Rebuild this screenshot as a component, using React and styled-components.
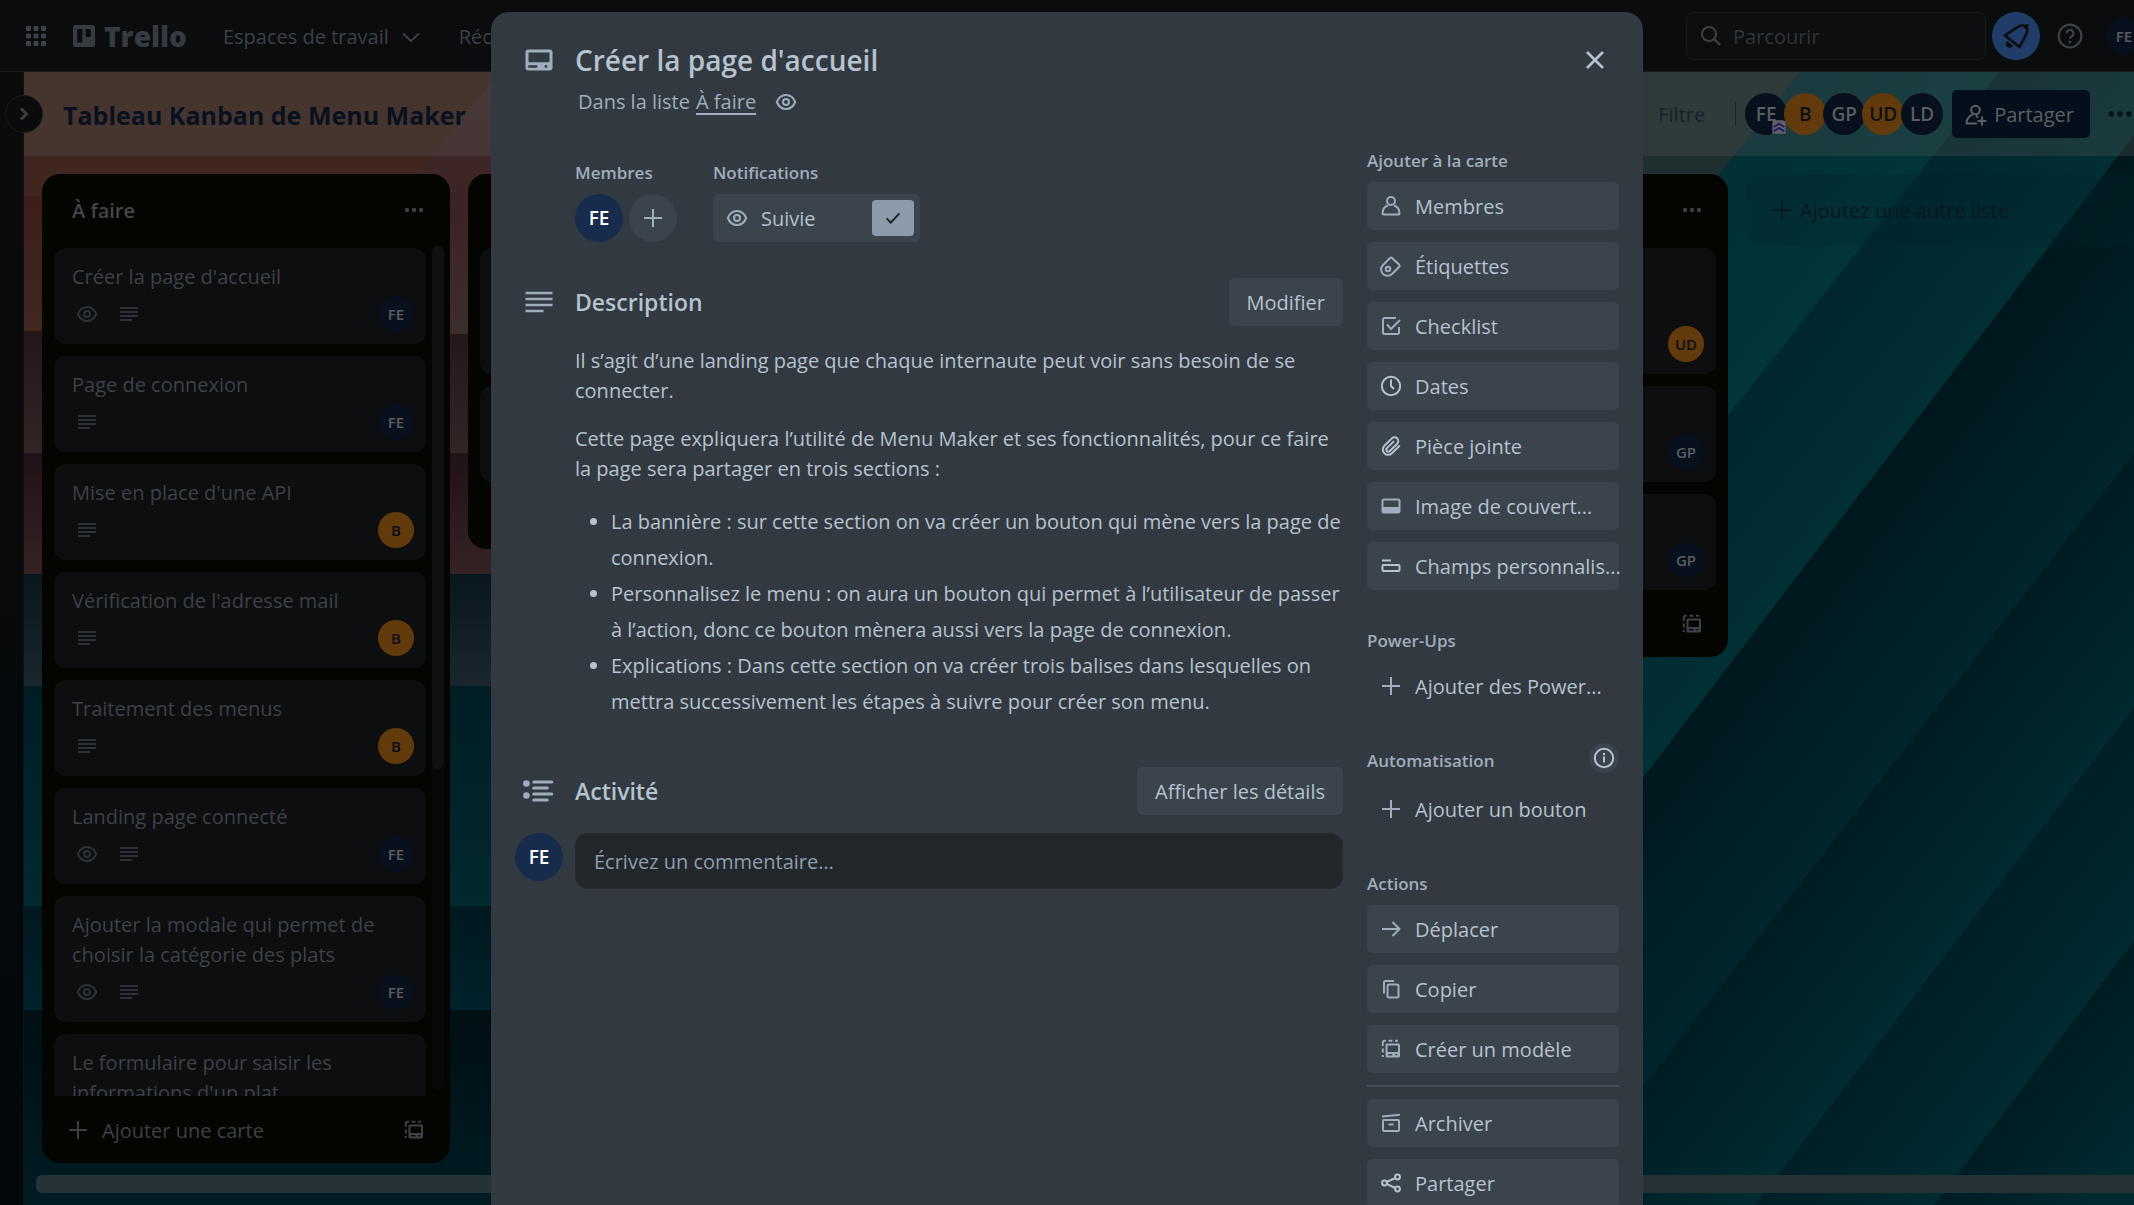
import React from "react";
import styled, { createGlobalStyle } from "styled-components";

const GlobalStyle = createGlobalStyle`
  *, *::before, *::after { box-sizing: border-box; }
  body {
    margin: 0;
    overflow: hidden;
    background: #00262b;
    font-family: "Open Sans", "Noto Sans", sans-serif;
    font-size: 20px;
    line-height: 30px;
  }
  button, input { font: inherit; color: inherit; }
  button { border: 0; padding: 0; background: none; cursor: pointer; }
  h1, h2, h3, p, ul { margin: 0; padding: 0; font-size: inherit; font-weight: inherit; }
`;

/* ---------- icons ---------- */

const Svg = styled.svg`
  display: block;
  flex: none;
  width: ${(p) => p.$size}px;
  height: ${(p) => p.$size}px;
  fill: none;
  stroke: currentColor;
  stroke-width: 2;
`;

const shapes = {
  grid: (
    <g fill="currentColor" stroke="none">
      {[2, 9.5, 17].map((y) => [2, 9.5, 17].map((x) => <rect key={`${x}-${y}`} x={x} y={y} width="5" height="5" rx="1" />))}
    </g>
  ),
  trello: (
    <path
      fill="currentColor"
      stroke="none"
      fillRule="evenodd"
      d="M3 1h18a2 2 0 0 1 2 2v18a2 2 0 0 1-2 2H3a2 2 0 0 1-2-2V3a2 2 0 0 1 2-2zM6 5a.8.8 0 0 0-.8.800v12a.8.8 0 0 0 .8.8h3.600a.8.8 0 0 0 .8-.8V5.800A.8.8 0 0 0 9.600 5zM14.400 5a.8.8 0 0 0-.8.800v6.400a.8.8 0 0 0 .8.8H18a.8.8 0 0 0 .8-.8V5.800A.8.8 0 0 0 18 5z"
    />
  ),
  chevronDown: <path d="M4 8.500l8 7.500 8-7.500" />,
  chevronRight: <path d="M9 6.500l5.500 5.500L9 17.500" strokeWidth="3" />,
  search: (
    <>
      <circle cx="10" cy="10" r="7" />
      <path d="M15 15l6 6" strokeWidth="2.400" />
    </>
  ),
  bell: (
    <>
      <path d="M2.500 11.500L14 4c2.500-1.600 6-1.300 7 .2 1 1.600.8 4.800-1 7.800l-5 9.500z" strokeLinejoin="round" strokeWidth="2.200" />
      <path d="M20 4.500l1.800-1.800" strokeWidth="2.200" strokeLinecap="round" />
      <path d="M4.500 17.500a2.400 2.400 0 0 0 4 2.800z" fill="currentColor" strokeWidth="1.500" />
    </>
  ),
  help: (
    <>
      <circle cx="12" cy="12" r="10.500" />
      <path d="M8.800 9.600a3.200 3.200 0 1 1 4.600 2.900c-1 .5-1.400 1-1.400 2.200" />
      <circle cx="12" cy="17.600" r="1.300" fill="currentColor" stroke="none" />
    </>
  ),
  dots: (
    <g fill="currentColor" stroke="none">
      <circle cx="5" cy="12" r="2.200" />
      <circle cx="12" cy="12" r="2.200" />
      <circle cx="19" cy="12" r="2.200" />
    </g>
  ),
  eye: (
    <>
      <path d="M2.800 12C4.500 7.800 8 5 12 5s7.500 2.800 9.200 7C19.500 16.200 16 19 12 19s-7.500-2.800-9.200-7z" />
      <circle cx="12" cy="12" r="3" />
    </>
  ),
  lines: <path d="M3 6h18M3 10h18M3 14h18M3 18h12" strokeWidth="1.800" />,
  activity: (
    <>
      <g fill="currentColor" stroke="none">
        <circle cx="3.600" cy="7" r="2.200" />
        <circle cx="3.600" cy="15" r="2.200" />
      </g>
      <path d="M8.500 6h12M8.500 10h9M8.500 14h12M8.500 18h9" strokeLinecap="round" />
    </>
  ),
  plus: <path d="M12 3v18M3 12h18" />,
  close: <path d="M4 4l16 16M20 4L4 20" strokeWidth="2.600" />,
  check: <path d="M5 12.500l4.500 4.500L19 7" strokeWidth="2" />,
  card: (
    <path
      fill="currentColor"
      stroke="none"
      fillRule="evenodd"
      d="M5 5h14a2 2 0 0 1 2 2v10a2 2 0 0 1-2 2H5a2 2 0 0 1-2-2V7a2 2 0 0 1 2-2zM5 7v6.500h14V7zM5.500 15.500a.8.8 0 0 0 0 1.700h4.700a.8.8 0 0 0 0-1.700zM16.600 15.400a.9.9 0 1 0 .01 0z"
    />
  ),
  user: (
    <>
      <circle cx="12" cy="7" r="4" />
      <path d="M9 11.500c-3 1-5.500 4-5.500 8 0 .8.400 1 1 1h15c.6 0 1-.2 1-1 0-4-2.500-7-5.500-8" />
    </>
  ),
  userPlus: (
    <>
      <circle cx="11.500" cy="7" r="4.300" />
      <path d="M8.800 11.500C5 13 2.500 16 2.500 20.500H13M14 14.500l-2-2M18 13.500v9M13.500 18h9" />
    </>
  ),
  tag: (
    <>
      <path d="M11 4a1.500 1.500 0 0 1 2 0l7.300 6.800a1.500 1.500 0 0 1 0 2L13 20a6.300 6.300 0 0 1-9-9z" strokeLinejoin="round" />
      <circle cx="9" cy="15" r="2.200" />
    </>
  ),
  checklist: (
    <>
      <path d="M17 4H5.500A1.500 1.500 0 0 0 4 5.500v13A1.500 1.500 0 0 0 5.500 20h13a1.500 1.500 0 0 0 1.500-1.500V13" />
      <path d="M8 10.500l4 4.500 9-9" />
    </>
  ),
  clock: (
    <>
      <circle cx="12" cy="12" r="9.200" />
      <path d="M12 5.500V12l3 3" />
    </>
  ),
  clip: (
    <path d="M20.300 12l-7.400 7.300a5.300 5.300 0 0 1-7.500-7.500l7.500-7.400a3.700 3.700 0 0 1 5.300 5.300l-7.400 7.300a2 2 0 0 1-2.900-2.900l6.600-6.500" strokeLinecap="round" />
  ),
  cover: (
    <>
      <rect x="3.500" y="5.500" width="17" height="13" rx="1.500" />
      <path d="M4 13h16v5.500H4z" fill="currentColor" stroke="none" />
    </>
  ),
  fields: (
    <>
      <path d="M3 6.500h9" />
      <rect x="3.500" y="11" width="17" height="6" rx="1" />
    </>
  ),
  info: (
    <>
      <circle cx="12" cy="12" r="9.200" />
      <path d="M12 10.500v6" />
      <circle cx="12" cy="8" r="1.200" fill="currentColor" stroke="none" />
    </>
  ),
  arrow: <path d="M3 12h17M13.500 5l7 7-7 7" />,
  copy: (
    <>
      <path d="M5 16.500V5.500A1.500 1.500 0 0 1 6.500 4H15" />
      <rect x="8.500" y="7.500" width="11" height="13" rx="1.500" />
    </>
  ),
  template: (
    <>
      <path d="M3.800 20v-2M3.800 15.500v-4M3.800 9V5.500A1.500 1.500 0 0 1 5.300 3.800H7M9.500 3.800h4M16 3.800h3" />
      <path
        fill="currentColor"
        stroke="none"
        fillRule="evenodd"
        d="M8 6.500h11.500A1.500 1.500 0 0 1 21 8v11a1.500 1.500 0 0 1-1.500 1.500H8A1.500 1.500 0 0 1 6.500 19V8A1.500 1.500 0 0 1 8 6.500zM8.500 8.500V15h10.500V8.500zM9.200 17v1.600h4V17zM16.500 17v1.600h1.600V17z"
      />
    </>
  ),
  archive: (
    <>
      <path d="M3 5.500l18-1.700" />
      <rect x="4" y="9" width="16" height="11" rx="1" />
      <path d="M9.500 13.500h5" />
    </>
  ),
  share: (
    <>
      <circle cx="5.500" cy="12" r="2.400" />
      <circle cx="18.500" cy="6" r="2.400" />
      <circle cx="18.500" cy="18" r="2.400" />
      <path d="M7.700 11l8.600-4M7.700 13l8.600 4" />
    </>
  ),
  admin: (
    <>
      <path d="M2 7a5 5 0 0 1 5-5h10a5 5 0 0 1 5 5v15H2z" fill="#625f6c" stroke="none" />
      <path d="M4 12l8-5 8 5M4 18.500l8-5 8 5" stroke="#22185a" strokeWidth="2.600" />
    </>
  ),
};

const Icon = ({ name, size = 24 }) => (
  <Svg $size={size} viewBox="0 0 24 24" aria-hidden="true">
    {shapes[name]}
  </Svg>
);

/* ---------- page shell ---------- */

const Page = styled.div`
  position: relative;
  height: 100vh;
  overflow: hidden;
`;

const Shell = styled.div`
  display: flex;
  flex-direction: column;
  width: calc(100% + 20px);
  height: 100%;
  position: relative;
`;

const Wallpaper = styled.svg`
  position: absolute;
  inset: 0;
  width: 100%;
  height: 100%;
`;

const TopBar = styled.header`
  display: flex;
  align-items: center;
  height: 72px;
  padding: 0 6px 0 24px;
  background: #0a0c0e;
  border-bottom: 1px solid #17191b;
  color: #3b4147;
`;

const Logo = styled.a`
  display: flex;
  align-items: center;
  gap: 8px;
  margin: 0 36px 0 24px;
  color: #353b40;
  font-weight: 800;
  font-size: 28px;
  text-decoration: none;
`;

const NavButton = styled.button`
  display: flex;
  align-items: center;
  gap: 10px;
  height: 48px;
  margin-right: 36px;
  padding-top: 2px;
  white-space: nowrap;
`;

const IconButton = styled.button`
  display: grid;
  place-items: center;
  flex: none;
  width: ${(p) => p.$size || 48}px;
  height: ${(p) => p.$size || 48}px;
  border-radius: 50%;
  color: ${(p) => p.$color || "inherit"};
  background: ${(p) => p.$bg || "transparent"};
`;

const CloseButton = styled(IconButton)`
  margin: -6px 0;
`;

const TopRight = styled.div`
  display: flex;
  align-items: center;
  gap: 6px;
  margin-left: auto;
`;

const SearchBox = styled.label`
  display: flex;
  align-items: center;
  gap: 10px;
  width: 300px;
  height: 48px;
  padding: 0 12px;
  border: 1px solid #17191c;
  border-radius: 8px;
  background: #0c0e0f;
  input {
    flex: 1;
    min-width: 0;
    border: 0;
    padding: 2px 0 0;
    outline: 0;
    background: none;
  }
  input::placeholder { color: #2f353b; opacity: 1; }
`;

const tones = {
  navyDim: ["#08101d", "#5b5d60"],
  orangeDim: ["#633a0c", "#0b1016"],
  navy: ["#172b4d", "#ffffff"],
};

const Avatar = styled.span`
  position: relative;
  display: grid;
  place-items: center;
  flex: none;
  width: ${(p) => p.$size}px;
  height: ${(p) => p.$size}px;
  border-radius: 50%;
  font-size: ${(p) => (p.$size > 36 ? 19 : 15)}px;
  line-height: 24px;
  font-weight: 600;
  background: ${(p) => tones[p.$tone][0]};
  color: ${(p) => tones[p.$tone][1]};
`;

const Body = styled.div`
  display: flex;
  flex: 1;
  min-height: 0;
`;

const Rail = styled.aside`
  position: relative;
  z-index: 1;
  flex: none;
  width: 24px;
  background: linear-gradient(#0b0b0b, #0a0a0b 40%, #04090b 60%, #05080a);
  border-right: 1px solid #101314;
`;

const RailToggle = styled.button`
  position: absolute;
  left: 5px;
  top: 23px;
  display: grid;
  place-items: center;
  width: 38px;
  height: 38px;
  border: 1px solid #1b1c1d;
  border-radius: 50%;
  background: #0a0b0c;
  color: #3a3f45;
`;

const Board = styled.main`
  display: flex;
  flex-direction: column;
  flex: 1;
  min-width: 0;
  position: relative;
`;

const BoardHeader = styled.div`
  display: flex;
  align-items: center;
  height: 84px;
  padding: 0 10px 0 39px;
  background: rgba(85, 85, 85, 0.3);
`;

const BoardTitle = styled.h1`
  padding-top: 2px;
  font-size: 25px;
  line-height: 36px;
  font-weight: 700;
  color: #08111f;
  white-space: nowrap;
`;

const BoardTools = styled.div`
  display: flex;
  align-items: center;
  margin-left: auto;
`;

const FilterButton = styled.button`
  height: 48px;
  margin-right: 30px;
  padding-top: 2px;
  color: #15242a;
`;

const Divider = styled.span`
  width: 1px;
  height: 24px;
  margin-right: 9px;
  background: #12292d;
`;

const AvatarStack = styled.div`
  display: flex;
  margin-right: 9px;
  ${Avatar} + ${Avatar} { margin-left: -3px; }
`;

const AdminBadge = styled.span`
  position: absolute;
  right: 0;
  bottom: 0;
  z-index: 1;
`;

const ShareButton = styled.button`
  display: flex;
  align-items: center;
  gap: 6px;
  height: 48px;
  margin-right: 6px;
  padding: 2px 16px 0 12px;
  border-radius: 5px;
  background: #050f1b;
  color: #5d6063;
  font-weight: 500;
`;

/* ---------- lists ---------- */

const Lists = styled.div`
  display: flex;
  flex: 1;
  align-items: flex-start;
  gap: 18px;
  min-height: 0;
  padding: 18px 0 12px 18px;
  overflow: hidden;
`;

const ListBox = styled.section`
  display: flex;
  flex-direction: column;
  flex: none;
  width: 408px;
  max-height: 100%;
  border-radius: 18px;
  background: #040500;
  color: #3c4147;
`;

const ListHeader = styled.div`
  display: flex;
  flex: none;
  align-items: center;
  justify-content: space-between;
  height: 72px;
  padding: 0 21px 0 30px;
  h2 { padding-top: 2px; font-weight: 600; color: #43474b; }
`;

const ListBody = styled.div`
  display: flex;
  gap: 6px;
  min-height: 0;
  padding: 0 ${(p) => (p.$scroll ? 6 : 12)}px 0 12px;
`;

const Cards = styled.div`
  display: flex;
  flex: 1;
  flex-direction: column;
  gap: 12px;
  min-height: 0;
  padding-top: 2px;
  overflow: hidden;
`;

const CardBox = styled.article`
  flex: none;
  padding: 12px 12px 12px 18px;
  border-radius: 12px;
  background: #0d0e10;
`;

const CardTitle = styled.h3`
  min-height: ${(p) => p.$lines * 30}px;
  margin: 2px 0 4px;
`;

const CardMeta = styled.div`
  display: flex;
  align-items: center;
  gap: 18px;
  min-height: 36px;
  padding-left: 3px;
  color: #2c3238;
  ${Avatar} { margin-left: auto; }
`;

const ScrollTrack = styled.div`
  width: 12px;
  margin-bottom: 6px;
  border-radius: 6px;
  background: #080906;
`;

const ScrollThumb = styled.div`
  height: 62%;
  border-radius: 6px;
  background: #101211;
`;

const ListFooter = styled.div`
  display: flex;
  align-items: center;
  justify-content: space-between;
  flex: none;
  height: 67px;
  padding: 0 21px 0 24px;
`;

const AddCard = styled.button`
  display: flex;
  align-items: center;
  gap: 12px;
  span { padding-top: 2px; }
`;

const AddList = styled.button`
  display: flex;
  align-items: center;
  gap: 6px;
  flex: none;
  width: 408px;
  height: 72px;
  padding: 0 24px;
  border-radius: 18px;
  background: rgba(0, 36, 42, 0.3);
  color: #0b1620;
  span { padding-top: 2px; }
`;

const BoardScroll = styled.div`
  height: 18px;
  margin: 0 0 12px 12px;
  border-radius: 6px;
  background: #253336;
`;

/* ---------- dialog ---------- */

const Overlay = styled.div`
  position: absolute;
  inset: 0;
  display: flex;
  justify-content: center;
  align-items: flex-start;
  padding-top: 12px;
  overflow: hidden;
`;

const Dialog = styled.div`
  width: 1152px;
  max-width: 100%;
  min-height: 100%;
  padding: 30px 24px;
  border-radius: 18px 18px 0 0;
  background: #323940;
  color: #b6c2cf;
`;

const Row = styled.div`
  display: grid;
  grid-template-columns: 48px minmax(0, 1fr) auto;
  column-gap: 12px;
  align-items: ${(p) => p.$align || "center"};
  min-height: ${(p) => p.$height || 0}px;
  margin-top: ${(p) => p.$top || 0}px;
`;

const IconCell = styled.span`
  display: grid;
  place-items: center;
  color: #9fadbc;
`;

const DialogTitle = styled.h2`
  font-size: 28px;
  line-height: 36px;
  font-weight: 600;
`;

const SubTitle = styled.p`
  display: flex;
  align-items: center;
  margin: 9px 0 26px 63px;
  color: #9fadbc;
  a {
    margin: 0 18px 0 6px;
    color: inherit;
    text-underline-offset: 4px;
    text-decoration-thickness: 2px;
  }
`;

const Columns = styled.div`
  display: grid;
  grid-template-columns: minmax(0, 1fr) 252px;
  column-gap: 24px;
`;

const MainColumn = styled.div`
  padding-top: 12px;
`;

const Indented = styled.div`
  padding-left: 60px;
`;

const MetaGroups = styled(Indented)`
  display: flex;
  gap: 36px;
  margin-bottom: 36px;
`;

const LabelRow = styled.div`
  display: flex;
  align-items: flex-end;
  justify-content: space-between;
  height: 30px;
  margin-bottom: ${(p) => (p.$roomy ? 12 : 9)}px;
`;

const Label = styled.h3`
  font-size: 17px;
  line-height: 24px;
  font-weight: 600;
  color: #9fadbc;
`;

const Inline = styled.div`
  display: flex;
  gap: 6px;
`;

const FollowButton = styled.label`
  position: relative;
  display: flex;
  align-items: center;
  gap: 12px;
  width: 207px;
  height: 48px;
  padding: 0 6px 0 12px;
  border-radius: 5px;
  background: #3b434c;
  color: #9fadbc;
  cursor: pointer;
  input {
    position: absolute;
    opacity: 0;
  }
`;

const FollowText = styled.span`
  flex: 1;
  padding-top: 2px;
  color: #b6c2cf;
`;

const Tick = styled.span`
  display: grid;
  place-items: center;
  width: 42px;
  height: 36px;
  border-radius: 4px;
  background: #8c9bab;
  color: #1d2125;
`;

const SectionTitle = styled.h2`
  font-size: 23px;
  line-height: 30px;
  font-weight: 600;
`;

const PlainButton = styled.button`
  height: 48px;
  padding: 2px 18px 0;
  border-radius: 5px;
  background: #3b434c;
`;

const Description = styled(Indented)`
  margin-top: 20px;
  p + p { margin-top: 18px; }
  ul {
    margin-top: 20px;
    padding-left: 36px;
    line-height: 36px;
  }
`;

const CommentInput = styled.input`
  grid-column: span 2;
  height: 56px;
  width: 100%;
  padding: 0 18px;
  border: 1px solid #262b30;
  border-radius: 12px;
  outline: 0;
  background: #22272b;
  &::placeholder { color: #8f9dac; opacity: 1; }
`;

const Sidebar = styled.aside`
  display: flex;
  flex-direction: column;
  gap: 33px;
`;

const SideList = styled.div`
  display: flex;
  flex-direction: column;
  gap: 12px;
`;

const SideButton = styled.button`
  display: flex;
  align-items: center;
  gap: 12px;
  width: 100%;
  height: 48px;
  padding: 0 0 0 12px;
  border-radius: 5px;
  background: ${(p) => (p.$plain ? "transparent" : "#3b434c")};
  color: ${(p) => (p.$bright ? "#b6c2cf" : "#9fadbc")};
  span {
    padding-top: 2px;
    color: #b6c2cf;
    white-space: nowrap;
  }
`;

const Rule = styled.hr`
  width: 100%;
  height: 2px;
  margin: 0;
  border: 0;
  background: #454f59;
`;

/* ---------- content ---------- */

const todo = [
  { title: "Créer la page d'accueil", watch: true, who: "FE" },
  { title: "Page de connexion", who: "FE" },
  { title: "Mise en place d'une API", who: "B" },
  { title: "Vérification de l'adresse mail", who: "B" },
  { title: "Traitement des menus", who: "B" },
  { title: "Landing page connecté", watch: true, who: "FE" },
  { title: "Ajouter la modale qui permet de choisir la catégorie des plats", watch: true, who: "FE" },
  { title: "Le formulaire pour saisir les informations d'un plat", watch: true, who: "" },
];

const dimTone = (who) => (who === "B" || who === "UD" ? "orangeDim" : "navyDim");

const Card = ({ title, watch, who, lines = 1 }) => (
  <CardBox>
    <CardTitle $lines={lines}>{title}</CardTitle>
    <CardMeta>
      {watch && <Icon name="eye" />}
      {title && <Icon name="lines" />}
      {who && (
        <Avatar $size={36} $tone={dimTone(who)}>
          {who}
        </Avatar>
      )}
    </CardMeta>
  </CardBox>
);

const List = ({ title, cards, scroll }) => (
  <ListBox>
    <ListHeader>
      <h2>{title}</h2>
      <IconButton $size={30} aria-label="Menu de la liste">
        <Icon name="dots" />
      </IconButton>
    </ListHeader>
    <ListBody $scroll={scroll}>
      <Cards>
        {cards.map((card, i) => (
          <Card key={i} {...card} />
        ))}
      </Cards>
      {scroll && (
        <ScrollTrack>
          <ScrollThumb />
        </ScrollTrack>
      )}
    </ListBody>
    <ListFooter>
      {title ? (
        <AddCard>
          <Icon name="plus" />
          <span>Ajouter une carte</span>
        </AddCard>
      ) : (
        <span />
      )}
      <IconButton $size={30} aria-label="Modèle">
        <Icon name="template" />
      </IconButton>
    </ListFooter>
  </ListBox>
);

const gradients = [
  ["g1", 1700, 100, 1900, 260, "#012d33", "#01373a"],
  ["g2", 1850, 270, 2010, 397, "#00272e", "#013337"],
  ["g3", 1917, 421, 2110, 574, "#00181d", "#002930"],
  ["g4", 1890, 769, 2040, 889, "#001c22", "#002e33"],
  ["g5", 1950, 950, 2100, 1070, "#001f26", "#002f34"],
  ["g6", 2035, 1073, 2134, 1151, "#001c23", "#002a30"],
];

const Background = () => (
  <Wallpaper viewBox="0 0 2134 1205" preserveAspectRatio="none" aria-hidden="true">
    <defs>
      {gradients.map(([id, x1, y1, x2, y2, a, b]) => (
        <linearGradient key={id} id={id} gradientUnits="userSpaceOnUse" x1={x1} y1={y1} x2={x2} y2={y2}>
          <stop offset="0" stopColor={a} />
          <stop offset="1" stopColor={b} />
        </linearGradient>
      ))}
      <linearGradient id="wall" x1="0" y1="0" x2="0" y2="1">
        <stop offset="0" stopColor="#40281f" />
        <stop offset="0.163" stopColor="#40261f" />
        <stop offset="0.163" stopColor="#3d1e1a" />
        <stop offset="0.275" stopColor="#412820" />
        <stop offset="0.275" stopColor="#26161a" />
        <stop offset="0.376" stopColor="#352426" />
        <stop offset="0.376" stopColor="#221118" />
        <stop offset="0.476" stopColor="#352224" />
        <stop offset="0.476" stopColor="#08181d" />
        <stop offset="0.569" stopColor="#1b252d" />
        <stop offset="0.569" stopColor="#001d24" />
        <stop offset="0.752" stopColor="#02292e" />
        <stop offset="0.752" stopColor="#00181f" />
        <stop offset="0.838" stopColor="#00222a" />
        <stop offset="0.838" stopColor="#000f14" />
        <stop offset="1" stopColor="#001c23" />
      </linearGradient>
      <linearGradient id="dusk" x1="0" y1="0" x2="0" y2="1">
        <stop offset="0" stopColor="#41302e" />
        <stop offset="0.5" stopColor="#3d2223" />
        <stop offset="1" stopColor="#3d2e2c" />
      </linearGradient>
    </defs>
    <rect width="1000" height="1205" fill="url(#wall)" />
    <path d="M500 72L417 174V334H500z" fill="url(#dusk)" />
    <rect x="1000" width="1134" height="1205" fill="#1f2f30" />
    <path d="M1800 72L1600 324V900H2134V72z" fill="url(#g1)" />
    <path d="M1999 72L1600 578V900H2134V72z" fill="url(#g2)" />
    <path d="M2134 135L1600 834V1205H2134z" fill="url(#g3)" />
    <path d="M2134 453L1600 1142V1205H2134z" fill="url(#g4)" />
    <path d="M2134 707L1755 1205H2134z" fill="url(#g5)" />
    <path d="M2134 941L1934 1205H2134z" fill="url(#g6)" />
  </Wallpaper>
);

const addItems = [
  ["user", "Membres"],
  ["tag", "Étiquettes"],
  ["checklist", "Checklist"],
  ["clock", "Dates", true],
  ["clip", "Pièce jointe", true],
  ["cover", "Image de couvert..."],
  ["fields", "Champs personnalis...", true],
];

const Side = ({ item: [icon, text, bright], plain }) => (
  <SideButton $plain={plain} $bright={bright}>
    <Icon name={icon} />
    <span>{text}</span>
  </SideButton>
);

const CardDialog = () => (
  <Overlay>
    <Dialog role="dialog" aria-label="Créer la page d'accueil">
      <Row $height={36}>
        <IconCell>
          <Icon name="card" size={36} />
        </IconCell>
        <DialogTitle>Créer la page d'accueil</DialogTitle>
        <CloseButton $color="#b6c2cf" aria-label="Fermer">
          <Icon name="close" />
        </CloseButton>
      </Row>
      <SubTitle>
        Dans la liste <a href="#liste">À faire</a>
        <Icon name="eye" />
      </SubTitle>
      <Columns>
        <MainColumn>
          <MetaGroups>
            <div>
              <LabelRow>
                <Label>Membres</Label>
              </LabelRow>
              <Inline>
                <Avatar $size={48} $tone="navy">
                  FE
                </Avatar>
                <IconButton $bg="#3b434c" $color="#9fadbc" aria-label="Ajouter un membre">
                  <Icon name="plus" />
                </IconButton>
              </Inline>
            </div>
            <div>
              <LabelRow>
                <Label>Notifications</Label>
              </LabelRow>
              <FollowButton>
                <input type="checkbox" defaultChecked />
                <Icon name="eye" />
                <FollowText>Suivie</FollowText>
                <Tick>
                  <Icon name="check" size={22} />
                </Tick>
              </FollowButton>
            </div>
          </MetaGroups>

          <Row $height={48}>
            <IconCell>
              <Icon name="lines" size={36} />
            </IconCell>
            <SectionTitle>Description</SectionTitle>
            <PlainButton>Modifier</PlainButton>
          </Row>
          <Description>
            <p>Il s’agit d’une landing page que chaque internaute peut voir sans besoin de se connecter.</p>
            <p>
              Cette page expliquera l’utilité de Menu Maker et ses fonctionnalités, pour ce faire la page sera partager en
              trois sections :
            </p>
            <ul>
              <li>La bannière : sur cette section on va créer un bouton qui mène vers la page de connexion.</li>
              <li>
                Personnalisez le menu : on aura un bouton qui permet à l’utilisateur de passer à l’action, donc ce bouton
                mènera aussi vers la page de connexion.
              </li>
              <li>
                Explications : Dans cette section on va créer trois balises dans lesquelles on mettra successivement les
                étapes à suivre pour créer son menu.
              </li>
            </ul>
          </Description>

          <Row $height={48} $top={47}>
            <IconCell>
              <Icon name="activity" size={36} />
            </IconCell>
            <SectionTitle>Activité</SectionTitle>
            <PlainButton>Afficher les détails</PlainButton>
          </Row>
          <Row $top={18} $align="start">
            <Avatar $size={48} $tone="navy">
              FE
            </Avatar>
            <CommentInput aria-label="Commentaire" placeholder="Écrivez un commentaire…" />
          </Row>
        </MainColumn>

        <Sidebar>
          <section>
            <LabelRow>
              <Label>Ajouter à la carte</Label>
            </LabelRow>
            <SideList>
              {addItems.map((item) => (
                <Side key={item[1]} item={item} />
              ))}
            </SideList>
          </section>
          <section>
            <LabelRow>
              <Label>Power-Ups</Label>
            </LabelRow>
            <Side item={["plus", "Ajouter des Power..."]} plain />
          </section>
          <section>
            <LabelRow $roomy>
              <Label>Automatisation</Label>
              <IconButton $size={30} $bg="#3b434c" $color="#b6c2cf" aria-label="Informations">
                <Icon name="info" />
              </IconButton>
            </LabelRow>
            <Side item={["plus", "Ajouter un bouton"]} plain />
          </section>
          <section>
            <LabelRow>
              <Label>Actions</Label>
            </LabelRow>
            <SideList>
              <Side item={["arrow", "Déplacer"]} />
              <Side item={["copy", "Copier"]} />
              <Side item={["template", "Créer un modèle"]} />
              <Rule />
              <Side item={["archive", "Archiver"]} />
              <Side item={["share", "Partager", true]} />
            </SideList>
          </section>
        </Sidebar>
      </Columns>
    </Dialog>
  </Overlay>
);

export default function App() {
  return (
    <Page>
      <GlobalStyle />
      <Background />
      <Shell>
        <TopBar>
          <IconButton $size={24} aria-label="Applications">
            <Icon name="grid" />
          </IconButton>
          <Logo href="#accueil">
            <Icon name="trello" />
            Trello
          </Logo>
          <NavButton>
            Espaces de travail
            <Icon name="chevronDown" />
          </NavButton>
          <NavButton>Récent</NavButton>
          <TopRight>
            <SearchBox>
              <Icon name="search" />
              <input placeholder="Parcourir" aria-label="Parcourir" />
            </SearchBox>
            <IconButton $bg="#1f3d68" $color="#0a0c0e" aria-label="Notifications">
              <Icon name="bell" size={28} />
            </IconButton>
            <IconButton aria-label="Aide">
              <Icon name="help" size={26} />
            </IconButton>
            <IconButton aria-label="Compte">
              <Avatar $size={36} $tone="navyDim">
                FE
              </Avatar>
            </IconButton>
          </TopRight>
        </TopBar>
        <Body>
          <Rail>
            <RailToggle aria-label="Déplier">
              <Icon name="chevronRight" />
            </RailToggle>
          </Rail>
          <Board>
            <BoardHeader>
              <BoardTitle>Tableau Kanban de Menu Maker</BoardTitle>
              <BoardTools>
                <FilterButton>Filtre</FilterButton>
                <Divider />
                <AvatarStack>
                  {["FE", "B", "GP", "UD", "LD"].map((who) => (
                    <Avatar key={who} $size={42} $tone={dimTone(who)}>
                      {who}
                      {who === "FE" && (
                        <AdminBadge>
                          <Icon name="admin" size={16} />
                        </AdminBadge>
                      )}
                    </Avatar>
                  ))}
                </AvatarStack>
                <ShareButton>
                  <Icon name="userPlus" />
                  Partager
                </ShareButton>
                <IconButton $color="#08111c" aria-label="Menu">
                  <Icon name="dots" size={30} />
                </IconButton>
              </BoardTools>
            </BoardHeader>
            <Lists>
              <List title="À faire" cards={todo} scroll />
              <List cards={[{ lines: 2 }, {}]} />
              <List cards={[{}]} />
              <List cards={[{ lines: 2, who: "UD" }, { who: "GP" }, { who: "GP" }]} />
              <AddList>
                <Icon name="plus" />
                <span>Ajoutez une autre liste</span>
              </AddList>
            </Lists>
            <BoardScroll />
          </Board>
        </Body>
      </Shell>
      <CardDialog />
    </Page>
  );
}
